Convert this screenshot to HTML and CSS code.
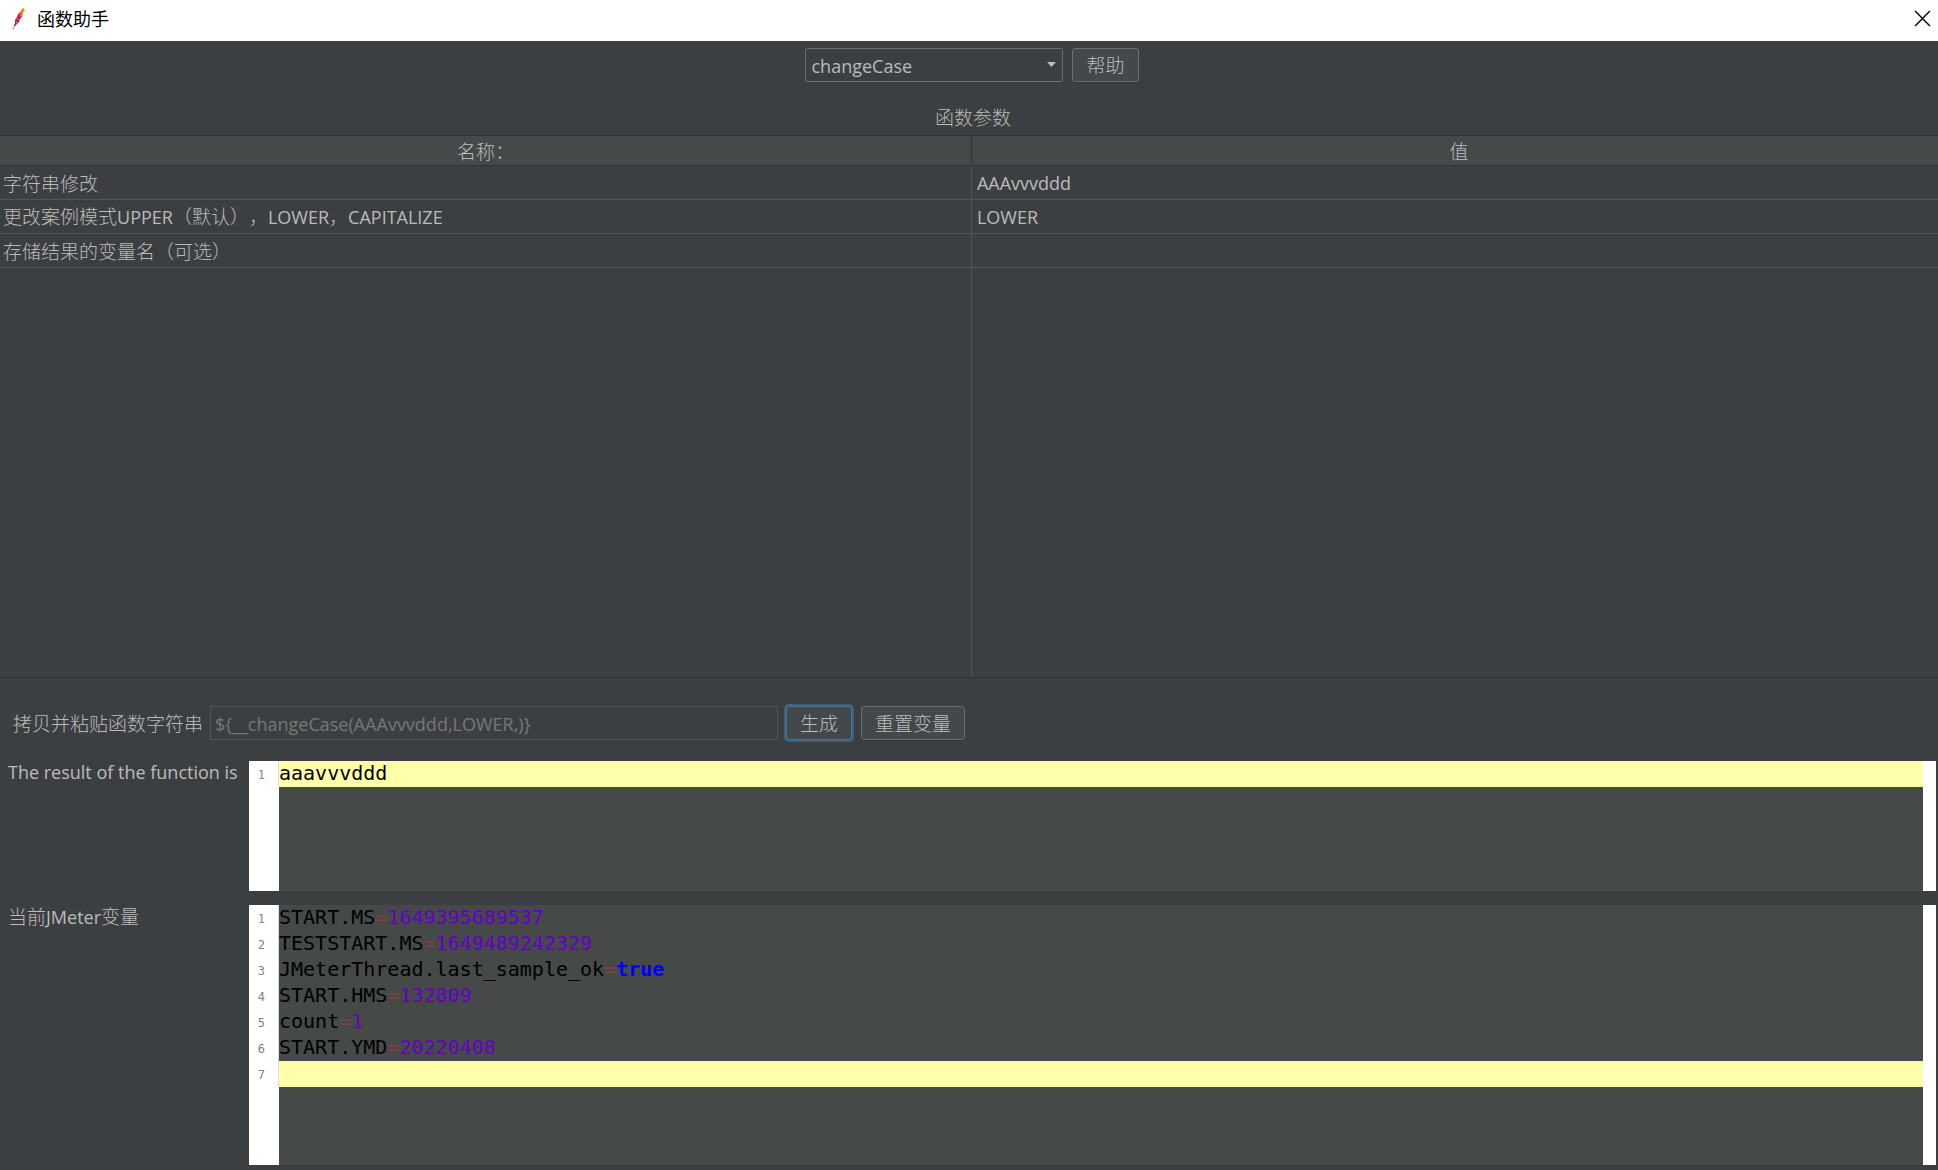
FILE: index.html
```html
<!DOCTYPE html>
<html lang="zh-CN">
<head>
<meta charset="utf-8">
<meta name="viewport" content="width=device-width, initial-scale=1">
<title>函数助手</title>
<link rel="stylesheet" href="styles.css">
</head>
<body>
<header class="titlebar">
  <svg class="feather" viewBox="0 0 14 22" aria-hidden="true">
    <defs>
      <linearGradient id="plume" x1="0.9" y1="0" x2="0.1" y2="1">
        <stop offset="0" stop-color="#f69923"/>
        <stop offset="0.25" stop-color="#f07a22"/>
        <stop offset="0.45" stop-color="#d22039"/>
        <stop offset="0.75" stop-color="#b8205a"/>
        <stop offset="1" stop-color="#7d2a8c"/>
      </linearGradient>
    </defs>
    <path fill="url(#plume)" d="M11 0 9 2 8 4 6 6 5 9 3 12 3 15 2 17 3 18 5 16 7 14 8 11 10 9 11 5 12 3 12 0Z"/>
    <path fill="none" stroke="#8a2070" stroke-dasharray="2 1" d="M3 17 1 21"/>
    <path fill="#f0a050" d="M12 2h1v1h-1z"/>
    <path fill="#fff" fill-opacity="0.7" d="M5 11h1v1H5zM8 7h1v1H8zM4 14h1v1H4z"/>
  </svg>
  <h1 class="titlebar-text">函数助手</h1>
  <button class="close" type="button" aria-label="关闭">
    <svg viewBox="0 0 16 16" aria-hidden="true"><path d="M1 1 15 15M15 1 1 15"/></svg>
  </button>
</header>

<main class="content">
  <div class="chooser">
    <div class="combo-box">
      <select class="combo" aria-label="函数">
        <option>changeCase</option>
      </select>
      <svg class="combo-arrow" viewBox="0 0 9 5" aria-hidden="true"><path d="M0 0h9L4.500 5z"/></svg>
    </div>
    <button class="button" type="button">帮助</button>
  </div>

  <section class="params">
    <h2 class="params-title" id="params-title">函数参数</h2>
    <div class="params-body">
      <table class="params-table" aria-labelledby="params-title">
        <thead>
          <tr><th scope="col">名称：</th><th scope="col">值</th></tr>
        </thead>
        <tbody>
          <tr><td>字符串修改</td><td><span class="latin">AAAvvvddd</span></td></tr>
          <tr><td>更改案例模式<span class="latin">UPPER</span>（默认），<span class="latin">LOWER</span>，<span class="latin">CAPITALIZE</span></td><td><span class="latin">LOWER</span></td></tr>
          <tr><td>存储结果的变量名（可选）</td><td></td></tr>
          <tr class="filler"><td></td><td></td></tr>
        </tbody>
      </table>
    </div>
  </section>

  <form class="generate">
    <label for="function-string">拷贝并粘贴函数字符串</label>
    <input class="function-string" id="function-string" type="text" value="${__changeCase(AAAvvvddd,LOWER,)}" readonly>
    <button class="button button-focus" type="button">生成</button>
    <button class="button" type="button">重置变量</button>
  </form>

  <section class="output">
    <h2 class="output-label latin" id="result-label">The result of the function is</h2>
    <div class="editor editor-short" role="group" aria-labelledby="result-label">
      <ol class="lines">
        <li class="current"><code>aaavvvddd</code></li>
      </ol>
    </div>
  </section>

  <section class="output">
    <h2 class="output-label" id="vars-label">当前<span class="latin">JMeter</span>变量</h2>
    <div class="editor editor-tall" role="group" aria-labelledby="vars-label">
      <ol class="lines">
        <li><code>START.MS<i>=</i><b class="num">1649395689537</b></code></li>
        <li><code>TESTSTART.MS<i>=</i><b class="num">1649489242329</b></code></li>
        <li><code>JMeterThread.last_sample_ok<i>=</i><b class="bool">true</b></code></li>
        <li><code>START.HMS<i>=</i><b class="num">132809</b></code></li>
        <li><code>count<i>=</i><b class="num">1</b></code></li>
        <li><code>START.YMD<i>=</i><b class="num">20220408</b></code></li>
        <li class="current"><code></code></li>
      </ol>
    </div>
  </section>
</main>
</body>
</html>
```
FILE: styles.css
```css
:root {
  --bg: #3c3f41;
  --panel: #45494a;
  --text: #bbbbbb;
  --line: #515557;
  --dark-line: #323537;
  --ui: "Open Sans", "Noto Sans CJK SC", sans-serif;
  --mono: "DejaVu Sans Mono", "Liberation Mono", monospace;
}

*,
*::before {
  box-sizing: border-box;
}

body {
  margin: 0;
  min-height: 100vh;
  display: flex;
  flex-direction: column;
  background: var(--bg);
  color: var(--text);
  font: 300 19px/26px "Noto Sans CJK SC", sans-serif;
  text-spacing-trim: space-all;
}

h1,
h2 {
  margin: 0;
  font: inherit;
}

.latin {
  font-family: var(--ui);
  font-size: 18px;
  font-weight: 400;
}

/* Title bar */
.titlebar {
  display: flex;
  align-items: center;
  height: 41px;
  padding: 0 7px 4px 12px;
  background: #fff;
  color: #000;
}

.feather {
  width: 14px;
  height: 22px;
}

.titlebar-text {
  flex: 1;
  margin-left: 11px;
  font-size: 18px;
  font-weight: 400;
  line-height: 24px;
  padding-bottom: 2px;
}

.close {
  display: flex;
  padding: 0;
  border: 0;
  background: none;
}

.close svg {
  width: 17px;
  height: 17px;
  fill: none;
  stroke: #000;
  stroke-width: 1.3;
}

.content {
  flex: 1;
  display: flex;
  flex-direction: column;
}

/* Function chooser */
.chooser {
  display: flex;
  justify-content: center;
  gap: 9px;
  padding: 7px 0 19px 6px;
}

.combo-box {
  position: relative;
  width: 258px;
}

.combo {
  width: 100%;
  height: 34px;
  padding: 2px 5px 0;
  appearance: none;
  border: 1px solid #6b6e70;
  border-radius: 2px;
  background: transparent;
  color: var(--text);
  font: 18px/26px var(--ui);
}

.combo-arrow {
  position: absolute;
  top: 14px;
  right: 7px;
  width: 9px;
  height: 5px;
  fill: var(--text);
  pointer-events: none;
}

.button {
  height: 34px;
  padding: 0 13px;
  border: 1px solid #6b6e70;
  border-radius: 3px;
  background: #43484a;
  box-shadow: 0 1px 1px #343739;
  color: var(--text);
  font: inherit;
}

.button-focus {
  margin-right: 9px;
  border-color: #4a7199;
  box-shadow: 0 0 0 2px #3d6185;
}

/* Parameter table */
.params {
  flex: 1;
  display: flex;
  flex-direction: column;
}

.params-title {
  padding: 3px 0 5px 8px;
  text-align: center;
}

.params-body {
  flex: 1;
  display: flex;
  border-top: 1px solid var(--dark-line);
  border-bottom: 1px solid var(--dark-line);
}

.params-table {
  width: 100%;
  table-layout: fixed;
  border-collapse: separate;
  border-spacing: 0;
}

.params-table th {
  height: 30px;
  padding: 0 0 0 8px;
  border-bottom: 1px solid var(--dark-line);
  background: var(--panel);
  font-weight: inherit;
}

.params-table th:first-child {
  width: 50.15%;
  padding-left: 0;
  border-right: 1px solid var(--dark-line);
}

.params-table td {
  height: 34px;
  padding: 0 5px;
  border-bottom: 1px solid var(--line);
}

.params-table td:first-child {
  padding: 0 3px;
  border-right: 1px solid var(--line);
}

.params-table .filler td {
  height: auto;
  border-bottom: 0;
}

/* Function string row */
.generate {
  display: flex;
  align-items: center;
  padding: 28px 13px 21px;
}

.function-string {
  flex: 0 1 568px;
  min-width: 0;
  height: 34px;
  margin: 0 8px 0 7px;
  padding: 1px 4px 0;
  border: 1px solid var(--line);
  background: transparent;
  color: #777;
  font: 18px/26px var(--ui);
}

/* Output editors */
.output {
  display: flex;
  padding: 0 2px 14px 8px;
}

.output:last-child {
  padding-bottom: 5px;
}

.output-label {
  flex: 0 0 241px;
  line-height: 22px;
}

.editor {
  flex: 1;
  border-left: 30px solid #fff;
  border-right: 13px solid #fff;
  background: #454948;
}

.editor-short {
  min-height: 130px;
}

.editor-tall {
  min-height: 260px;
}

.lines {
  margin: 0 0 0 -30px;
  padding: 0;
  list-style: none;
  counter-reset: line;
  color: #000;
  font: 20px/24px var(--mono);
}

.lines li {
  display: flex;
  height: 26px;
  counter-increment: line;
}

.lines li::before {
  content: counter(line);
  width: 30px;
  padding: 2px 13px 0 0;
  border-right: 1px solid #ddd;
  color: #808080;
  font-size: 12px;
  text-align: right;
}

.lines code {
  flex: 1;
  font: inherit;
}

.lines .current code {
  background: #ffffaa;
}

.lines i {
  color: #804040;
  font-style: normal;
}

.num {
  color: #6400c8;
  font-weight: 400;
}

.bool {
  color: #0000ff;
}
```
